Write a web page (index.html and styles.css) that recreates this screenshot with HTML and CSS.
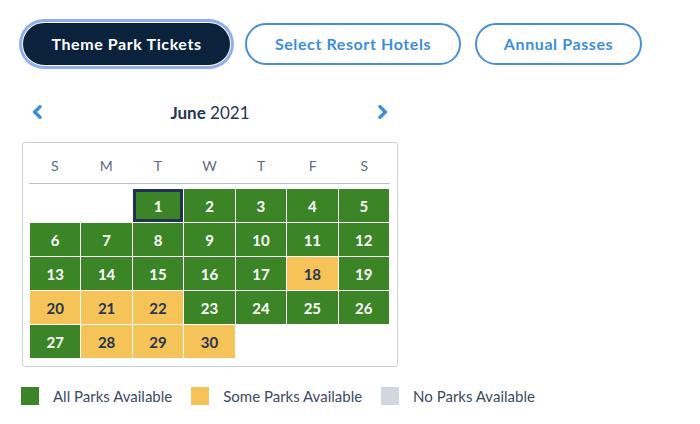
FILE: index.html
```html
<!DOCTYPE html>
<html>
<head>
<meta charset="utf-8">
<link rel="stylesheet" href="styles.css">
</head>
<body>
<div class="page">
  <div class="tabs">
    <button class="tab active">Theme Park Tickets</button>
    <button class="tab">Select Resort Hotels</button>
    <button class="tab">Annual Passes</button>
  </div>

  <div class="cal-wrap">
    <div class="nav">
      <svg class="chev" width="10" height="14" viewBox="0 0 10 14"><polyline points="8,1.8 2.6,7 8,12.2" fill="none" stroke="#3d8ed8" stroke-width="3.4" stroke-linecap="round" stroke-linejoin="round"/></svg>
      <div class="month"><b>June</b> 2021</div>
      <svg class="chev" width="10" height="14" viewBox="0 0 10 14"><polyline points="2,1.8 7.4,7 2,12.2" fill="none" stroke="#3d8ed8" stroke-width="3.4" stroke-linecap="round" stroke-linejoin="round"/></svg>
    </div>

    <div class="calendar">
      <div class="dow">
        <span>S</span><span>M</span><span>T</span><span>W</span><span>T</span><span>F</span><span>S</span>
      </div>
      <div class="grid">
        <div class="cell empty"></div>
        <div class="cell empty"></div>
        <div class="cell g today">1</div>
        <div class="cell g">2</div>
        <div class="cell g">3</div>
        <div class="cell g">4</div>
        <div class="cell g">5</div>
        <div class="cell g">6</div>
        <div class="cell g">7</div>
        <div class="cell g">8</div>
        <div class="cell g">9</div>
        <div class="cell g">10</div>
        <div class="cell g">11</div>
        <div class="cell g">12</div>
        <div class="cell g">13</div>
        <div class="cell g">14</div>
        <div class="cell g">15</div>
        <div class="cell g">16</div>
        <div class="cell g">17</div>
        <div class="cell y">18</div>
        <div class="cell g">19</div>
        <div class="cell y">20</div>
        <div class="cell y">21</div>
        <div class="cell y">22</div>
        <div class="cell g">23</div>
        <div class="cell g">24</div>
        <div class="cell g">25</div>
        <div class="cell g">26</div>
        <div class="cell g">27</div>
        <div class="cell y">28</div>
        <div class="cell y">29</div>
        <div class="cell y">30</div>
      </div>
    </div>
  </div>

  <div class="legend">
    <div class="item"><span class="sw sw-g"></span>All Parks Available</div>
    <div class="item"><span class="sw sw-y"></span>Some Parks Available</div>
    <div class="item"><span class="sw sw-n"></span>No Parks Available</div>
  </div>
</div>
</body>
</html>
```

FILE: styles.css
```css
* { box-sizing: border-box; }
body {
  margin: 0;
  background: #ffffff;
  font-family: Lato, "Noto Sans", sans-serif;
  color: #253552;
}
.page {
  padding: 23px 0 0 22px;
}
.tabs {
  display: flex;
  gap: 14px;
  margin-left: 1px;
}
.tab {
  height: 42px;
  border-radius: 21px;
  border: 2px solid #4a90d9;
  background: #fff;
  color: #3d8ed8;
  font-family: Lato, "Noto Sans", sans-serif;
  font-weight: 700;
  font-size: 16px;
  letter-spacing: 0.6px;
  padding: 0 0 2px;
  cursor: pointer;
}
.tab:nth-child(1) { width: 207px; }
.tab:nth-child(2) { width: 216px; margin-left: 1px; }
.tab:nth-child(3) { width: 167px; }
.tab.active {
  background: #0b223d;
  border-color: #0b223d;
  color: #ffffff;
  box-shadow: 0 0 0 1px #ffffff, 0 0 0 4px #8eaef0;
}
.cal-wrap {
  width: 376px;
  margin-top: 34px;
}
.nav {
  display: flex;
  align-items: center;
  justify-content: space-between;
  height: 26px;
  padding: 0 10px;
}
.month {
  font-size: 17px;
  color: #253552;
}
.month b { font-weight: 700; }
.calendar {
  margin-top: 17px;
  border: 1px solid #c9d0da;
  border-radius: 3px;
  padding: 0 8px 8px 7px;
}
.dow {
  display: grid;
  grid-template-columns: repeat(7, 1fr);
  height: 41px;
  align-items: center;
  border-bottom: 1px solid #b3bfcd;
  margin: 0 -1px;
  font-size: 14px;
  color: #5d6c82;
  text-align: center;
  padding-top: 4px;
}
.grid {
  display: grid;
  grid-template-columns: repeat(7, 1fr);
  grid-auto-rows: 33px;
  gap: 1px;
  margin-top: 5px;
}
.cell {
  display: flex;
  align-items: center;
  justify-content: center;
  font-weight: 700;
  font-size: 15px;
}
.cell.g { background: #3b8526; color: #ffffff; }
.cell.y { background: #f6c358; color: #253552; }
.cell.today { box-shadow: inset 0 0 0 3px #223150; }
.legend {
  display: flex;
  gap: 19px;
  margin-top: 20px;
  margin-left: -1px;
  font-size: 15px;
  color: #3b4a63;
}
.item {
  display: flex;
  align-items: center;
  height: 18px;
}
.sw {
  display: inline-block;
  width: 18px;
  height: 18px;
  margin-right: 14px;
}
.sw-g { background: #3b8526; }
.sw-y { background: #f6c358; }
.sw-n { background: #d2d7df; }
```
